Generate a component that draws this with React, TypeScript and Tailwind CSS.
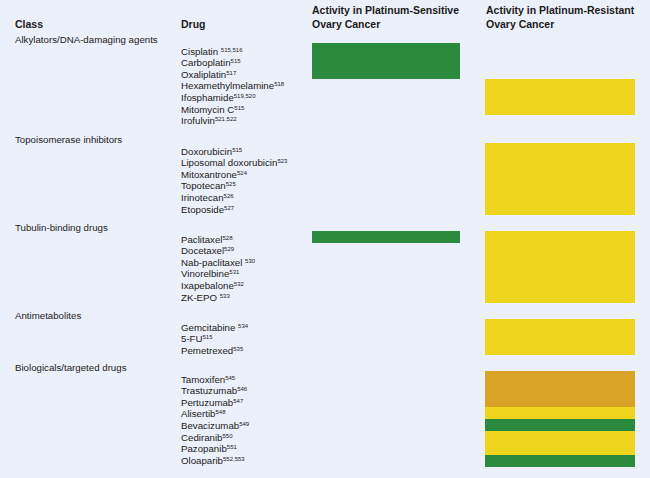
import React from 'react'

type Seg = { n: number; c?: string }
type Drug = [string, string, boolean?]

const GREEN = 'bg-[#2c8a3e]'
const YELLOW = 'bg-[#eed51e]'
const ORANGE = 'bg-[#d9a325]'

const groups: { cls: string; drugs: Drug[]; sens: Seg[]; res: Seg[] }[] = [
  {
    cls: 'Alkylators/DNA-damaging agents',
    drugs: [
      ['Cisplatin', '515,516', true],
      ['Carboplatin', '515'],
      ['Oxaliplatin', '517'],
      ['Hexamethylmelamine', '518'],
      ['Ifosphamide', '519,520'],
      ['Mitomycin C', '515'],
      ['Irofulvin', '521,522'],
    ],
    sens: [{ n: 3, c: GREEN }, { n: 4 }],
    res: [{ n: 3 }, { n: 3, c: YELLOW }, { n: 1 }],
  },
  {
    cls: 'Topoisomerase inhibitors',
    drugs: [
      ['Doxorubicin', '515'],
      ['Liposomal doxorubicin', '523'],
      ['Mitoxantrone', '524'],
      ['Topotecan', '525'],
      ['Irinotecan', '526'],
      ['Etoposide', '527'],
    ],
    sens: [{ n: 6 }],
    res: [{ n: 6, c: YELLOW }],
  },
  {
    cls: 'Tubulin-binding drugs',
    drugs: [
      ['Paclitaxel', '528'],
      ['Docetaxel', '529'],
      ['Nab-paclitaxel', '530', true],
      ['Vinorelbine', '531'],
      ['Ixapebalone', '532'],
      ['ZK-EPO', '533', true],
    ],
    sens: [{ n: 1, c: GREEN }, { n: 5 }],
    res: [{ n: 6, c: YELLOW }],
  },
  {
    cls: 'Antimetabolites',
    drugs: [
      ['Gemcitabine', '534', true],
      ['5-FU', '515'],
      ['Pemetrexed', '535'],
    ],
    sens: [{ n: 3 }],
    res: [{ n: 3, c: YELLOW }],
  },
  {
    cls: 'Biologicals/targeted drugs',
    drugs: [
      ['Tamoxifen', '545'],
      ['Trastuzumab', '546'],
      ['Pertuzumab', '547'],
      ['Alisertib', '548'],
      ['Bevacizumab', '549'],
      ['Cediranib', '550'],
      ['Pazopanib', '551'],
      ['Oloaparib', '552,553'],
    ],
    sens: [{ n: 8 }],
    res: [{ n: 3, c: ORANGE }, { n: 1, c: YELLOW }, { n: 1, c: GREEN }, { n: 2, c: YELLOW }, { n: 1, c: GREEN }],
  },
]

const rowH = ['h-0', 'h-[12px]', 'h-[24px]', 'h-[36px]', 'h-[48px]', 'h-[60px]', 'h-[72px]', 'h-[84px]', 'h-[96px]']

// bar column: one empty row for the class label, then one 12px row per drug
const Bars = ({ segs, w }: { segs: Seg[]; w: string }) => (
  <div className={`pt-[12px] ${w}`}>
    {segs.map((s, i) => (
      <div key={i} className={`${rowH[s.n]} ${s.c ?? ''}`} />
    ))}
  </div>
)

export default function App() {
  return (
    <div className="w-[650px] h-[478px] overflow-hidden bg-[#ecf0fa] pl-[15px] text-[#1d1a1b] font-['Liberation_Sans',Arial,sans-serif]">
      <div className="grid grid-cols-[166px_131px_173px_150px] h-[31px] pt-[4px] text-[10.5px] leading-[13.5px] font-bold whitespace-nowrap">
        <div className="self-end">Class</div>
        <div className="self-end">Drug</div>
        <div>
          Activity in Platinum-Sensitive
          <br />
          Ovary Cancer
        </div>
        <div className="pl-[1px]">
          Activity in Platinum-Resistant
          <br />
          Ovary Cancer
        </div>
      </div>

      {groups.map((g) => (
        <div key={g.cls} className="grid grid-cols-[166px_131px_173px_150px] items-start mb-[4px] text-[9.7px] leading-[11.6px]">
          <div className="pt-[3px] -mb-[4px]">{g.cls}</div>
          <div className="pt-[3px] -mb-[4px]">
            <div className="h-[11.6px]" />
            {g.drugs.map(([name, ref, space]) => (
              <div key={name} className="whitespace-nowrap">
                {name}
                {space ? ' ' : ''}
                <sup className="text-[6px]">{ref}</sup>
              </div>
            ))}
          </div>
          <Bars segs={g.sens} w="w-[148px]" />
          <Bars segs={g.res} w="w-[150px]" />
        </div>
      ))}
    </div>
  )
}
